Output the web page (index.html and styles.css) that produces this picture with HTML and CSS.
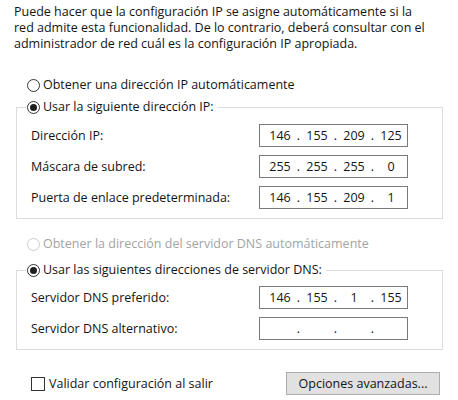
FILE: index.html
```html
<!DOCTYPE html>
<html lang="es">
<head>
<meta charset="utf-8">
<link rel="stylesheet" href="styles.css">
</head>
<body>
<div class="page">
  <p class="intro">Puede hacer que la configuración IP se asigne automáticamente si la red admite esta funcionalidad. De lo contrario, deberá consultar con el administrador de red cuál es la configuración IP apropiada.</p>

  <label class="opt opt-first"><span class="radio"></span><span>Obtener una dirección IP automáticamente</span></label>

  <fieldset class="group group-ip">
    <legend class="opt"><span class="radio checked"></span><span>Usar la siguiente dirección IP:</span></legend>
    <div class="rows">
      <div class="row"><span class="lbl">Dirección IP:</span>
        <div class="ipbox"><span class="oct">146</span><span class="dot">.</span><span class="oct">155</span><span class="dot">.</span><span class="oct">209</span><span class="dot">.</span><span class="oct">125</span></div></div>
      <div class="row"><span class="lbl">Máscara de subred:</span>
        <div class="ipbox"><span class="oct">255</span><span class="dot">.</span><span class="oct">255</span><span class="dot">.</span><span class="oct">255</span><span class="dot">.</span><span class="oct">0</span></div></div>
      <div class="row"><span class="lbl">Puerta de enlace predeterminada:</span>
        <div class="ipbox"><span class="oct">146</span><span class="dot">.</span><span class="oct">155</span><span class="dot">.</span><span class="oct">209</span><span class="dot">.</span><span class="oct">1</span></div></div>
    </div>
  </fieldset>

  <label class="opt opt-disabled"><span class="radio disabled"></span><span>Obtener la dirección del servidor DNS automáticamente</span></label>

  <fieldset class="group group-dns">
    <legend class="opt"><span class="radio checked"></span><span>Usar las siguientes direcciones de servidor DNS:</span></legend>
    <div class="rows">
      <div class="row"><span class="lbl">Servidor DNS preferido:</span>
        <div class="ipbox"><span class="oct">146</span><span class="dot">.</span><span class="oct">155</span><span class="dot">.</span><span class="oct">1</span><span class="dot">.</span><span class="oct">155</span></div></div>
      <div class="row"><span class="lbl">Servidor DNS alternativo:</span>
        <div class="ipbox"><span class="oct"></span><span class="dot">.</span><span class="oct"></span><span class="dot">.</span><span class="oct"></span><span class="dot">.</span><span class="oct"></span></div></div>
    </div>
  </fieldset>

  <div class="footer">
    <label class="check"><span class="box"></span><span>Validar configuración al salir</span></label>
    <button class="btn" type="button">Opciones avanzadas...</button>
  </div>
</div>
</body>
</html>
```

FILE: styles.css
```css
html, body {
  margin: 0;
  padding: 0;
  background: #ffffff;
}
body {
  font-family: "Open Sans", "Noto Sans", "DejaVu Sans", sans-serif;
  font-size: 12.5px;
  color: #141414;
  width: 458px;
  height: 400px;
  overflow: hidden;
}
.page {
  display: flex;
  flex-direction: column;
}
.intro {
  margin: 0;
  padding: 4px 30px 0 14px;
  line-height: 16px;
}
.opt {
  display: flex;
  align-items: center;
  gap: 3px;
  line-height: 16px;
  height: 16px;
}
.opt-first {
  margin: 25px 0 0 27px;
}
.opt-disabled {
  margin: 17px 0 0 27px;
  color: #a3a3a3;
}
.radio {
  width: 11px;
  height: 11px;
  border: 1px solid #333333;
  border-radius: 50%;
  background: #fff;
  display: flex;
  align-items: center;
  justify-content: center;
  flex: none;
}
.radio.checked::after {
  content: "";
  width: 7px;
  height: 7px;
  border-radius: 50%;
  background: #1f1f1f;
}
.radio.disabled {
  border-color: #cccccc;
}
.group {
  margin: 6px 15px 0 16px;
  padding: 9px 0 9px 14px;
  border: 1px solid #dcdcdc;
  min-width: 0;
}
.group-dns {
  margin-top: 10px;
  padding-top: 8px;
}
.group legend {
  margin-left: -5px;
  padding: 0 4px 0 1px;
}
.rows {
  display: flex;
  flex-direction: column;
  gap: 8px;
}
.row {
  display: grid;
  grid-template-columns: 228px 149px;
  align-items: center;
  height: 23px;
}
.ipbox {
  box-sizing: border-box;
  height: 23px;
  border: 1px solid #7a7a7a;
  background: #fff;
  display: flex;
  align-items: center;
  padding-left: 5px;
  line-height: 16px;
}
.oct {
  width: 30px;
  text-align: center;
}
.dot {
  width: 7px;
  text-align: center;
}
.footer {
  display: flex;
  align-items: center;
  justify-content: space-between;
  margin: 22px 18px 0 31px;
}
.check {
  display: flex;
  align-items: center;
  gap: 4px;
  line-height: 16px;
}
.box {
  width: 14px;
  height: 14px;
  border: 1px solid #333333;
  box-sizing: border-box;
  background: #fff;
}
.btn {
  box-sizing: border-box;
  width: 154px;
  height: 23px;
  background: #e1e1e1;
  border: 1px solid #adadad;
  font-family: inherit;
  font-size: 12.5px;
  color: #141414;
  padding: 0;
}
```
